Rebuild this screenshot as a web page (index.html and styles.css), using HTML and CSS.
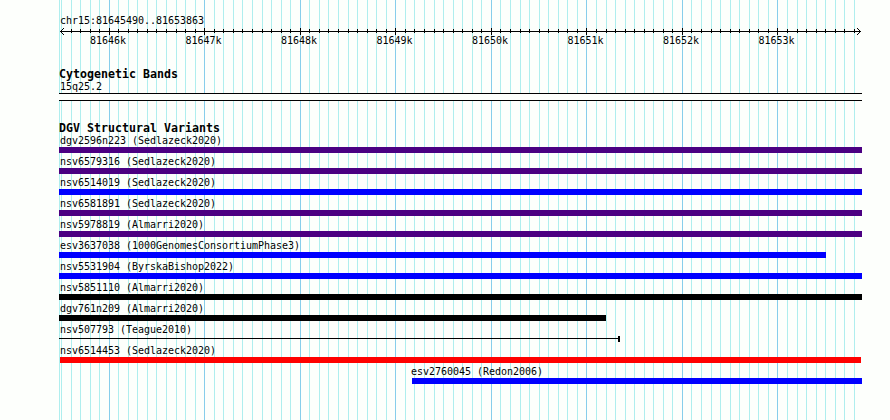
FILE: index.html
```
<!DOCTYPE html>
<html lang="en">
<head>
    <meta charset="UTF-8">
    <title>chr15:81645490..81653863</title>
    <link rel="stylesheet" href="styles.css">
</head>
<body>
    <div class="browser">
        <svg class="grid" id="grid" width="803" height="420" shape-rendering="crispEdges"></svg>

        <div class="ruler">
            <div class="region">chr15:81645490..81653863</div>
            <svg class="axis" id="axis" width="803" height="9" shape-rendering="crispEdges"></svg>
            <div class="scale">
                <span>81646k</span><span>81647k</span><span>81648k</span><span>81649k</span><span>81650k</span><span>81651k</span><span>81652k</span><span>81653k</span>
            </div>
        </div>

        <div class="track bands">
            <h2>Cytogenetic Bands</h2>
            <div class="name">15q25.2</div>
            <div class="band"></div>
        </div>

        <div class="track variants">
            <h2>DGV Structural Variants</h2>
            <div id="variants"></div>
        </div>
    </div>
    <script>
        const variants = [
            { name: 'dgv2596n223 (Sedlazeck2020)', type: 'complex', start: 0, end: 803 },
            { name: 'nsv6579316 (Sedlazeck2020)', type: 'complex', start: 0, end: 803 },
            { name: 'nsv6514019 (Sedlazeck2020)', type: 'gain', start: 0, end: 803 },
            { name: 'nsv6581891 (Sedlazeck2020)', type: 'complex', start: 0, end: 803 },
            { name: 'nsv5978819 (Almarri2020)', type: 'complex', start: 0, end: 803 },
            { name: 'esv3637038 (1000GenomesConsortiumPhase3)', type: 'gain', start: 0, end: 767 },
            { name: 'nsv5531904 (ByrskaBishop2022)', type: 'gain', start: 0, end: 803 },
            { name: 'nsv5851110 (Almarri2020)', type: 'other', start: 0, end: 803 },
            { name: 'dgv761n209 (Almarri2020)', type: 'other', start: 0, end: 547 },
            { name: 'nsv507793 (Teague2010)', type: 'insertion', start: 0, end: 561 },
            { name: 'nsv6514453 (Sedlazeck2020)', type: 'loss', start: 1, end: 802 },
            { name: 'esv2760045 (Redon2006)', type: 'gain', start: 353, end: 803 }
        ];

        document.getElementById('variants').innerHTML = variants.map(v => `
            <div class="variant">
                <div class="name" style="margin-left: ${Math.max(0, v.start - 2)}px">${v.name}</div>
                <div class="bar ${v.type}" style="margin-left: ${v.start}px; width: ${v.end - v.start}px"></div>
            </div>`).join('');

        // one grid line every 100 bp, a darker one every 1000 bp
        let lines = '<rect class="minor" x="0" width="1" height="420"/>';
        let ticks = '<rect x="1" y="4" width="801" height="1"/>';
        for (let i = 0; i <= 83; i++) {
            const x = Math.floor(2.46 + i * 9.5534);
            const major = i % 10 === 5;
            lines += `<rect class="${major ? 'major' : 'minor'}" x="${x}" width="1" height="420"/>`;
            if (i > 0) {
                ticks += `<rect x="${x}" y="${major ? 1 : 2}" width="1" height="${major ? 7 : 4}"/>`;
            }
        }
        // arrow heads
        for (let i = 1; i <= 3; i++) {
            ticks += `<rect x="${1 + i}" y="${4 - i}" width="1" height="1"/><rect x="${1 + i}" y="${4 + i}" width="1" height="1"/>`;
            ticks += `<rect x="${801 - i}" y="${4 - i}" width="1" height="1"/><rect x="${801 - i}" y="${4 + i}" width="1" height="1"/>`;
        }
        document.getElementById('grid').innerHTML = lines;
        document.getElementById('axis').innerHTML = ticks;
    </script>
</body>
</html>
```
FILE: styles.css
```
* {
    box-sizing: border-box;
}
body {
    margin: 0;
    background-color: #fdfffc;
    color: #000;
    font-family: "DejaVu Sans Mono", "Liberation Mono", monospace;
    font-size: 10px;
    line-height: 13px;
    letter-spacing: -0.02px;
    white-space: nowrap;
}
.browser {
    position: relative;
    width: 803px;
    height: 420px;
    margin-left: 59px;
    padding-top: 14px;
    overflow: hidden;
}
.grid {
    position: absolute;
    top: 0;
    left: 0;
    z-index: -1;
}
.minor {
    fill: #afeeee;
}
.major {
    fill: #87ceeb;
}
.ruler {
    height: 54px;
}
.region {
    height: 13px;
    padding-left: 1px;
}
.axis {
    display: block;
}
.scale {
    display: flex;
    gap: 59.5px;
    margin-top: -2px;
    padding-left: 31px;
}
.scale span {
    width: 36px;
}
h2 {
    margin: 0;
    height: 12px;
    font-size: 11.6px;
    line-height: 13px;
    font-weight: bold;
    letter-spacing: 0.016px;
}
.name {
    height: 13px;
    padding-left: 1px;
}
.band {
    height: 8px;
    background-color: #fdfffc;
    border-top: 1px solid #000;
    border-bottom: 1px solid #000;
}
.variants {
    margin-top: 21px;
}
.variant {
    height: 21px;
}
.bar {
    height: 6px;
}
.complex {
    background-color: #4b0082;
}
.gain {
    background-color: #0000ff;
}
.loss {
    background-color: #ff0000;
}
.other {
    background-color: #000;
}
.insertion {
    background: linear-gradient(#000, #000) 0 2px / 100% 1px no-repeat;
    border-right: 2px solid #000;
}
```
